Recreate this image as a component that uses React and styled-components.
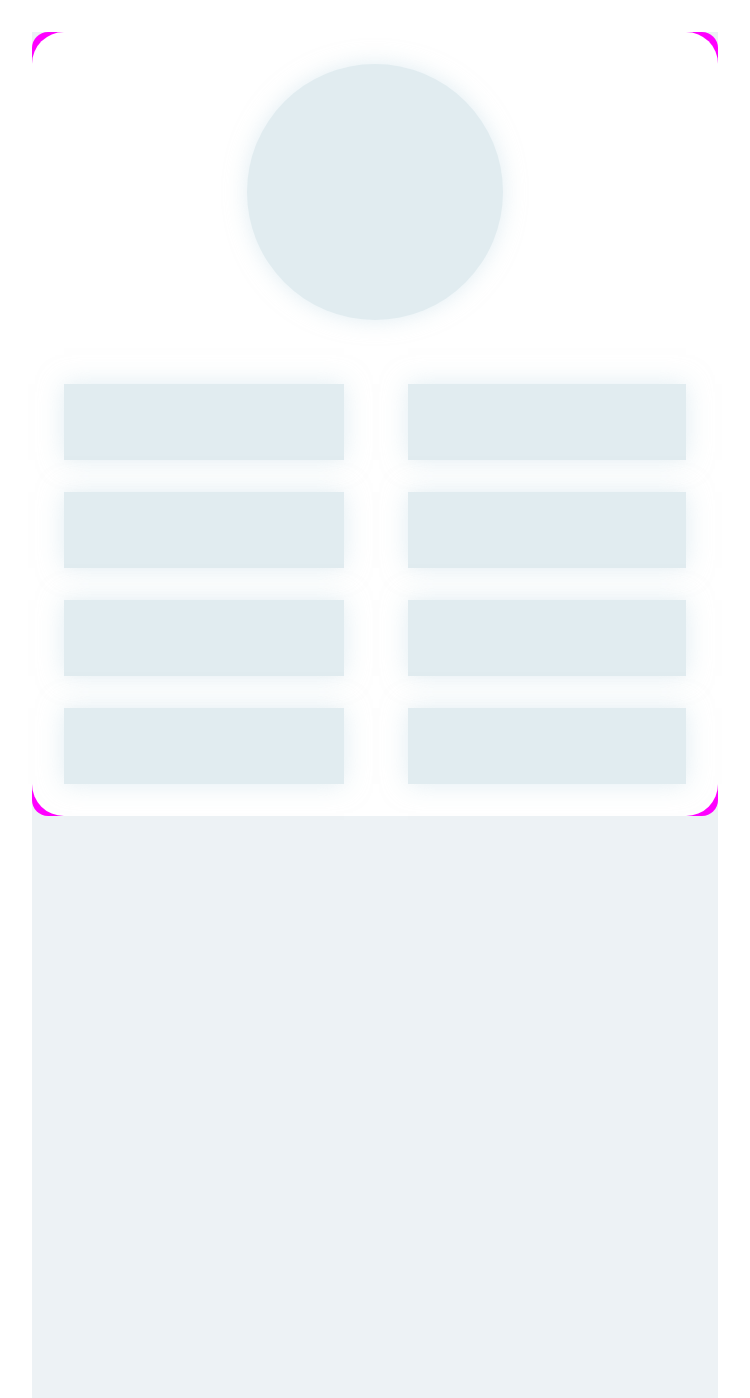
import React from "react";
import styled, { createGlobalStyle } from "styled-components";

const GlobalStyle = createGlobalStyle`
  html, body {
    margin: 0;
    padding: 0;
    background: #ffffff;
    font-family: "Liberation Sans", Arial, sans-serif;
  }
`;

const Page = styled.div`
  padding: 32px 32px 0;
  box-sizing: border-box;
`;

const Panel = styled.div`
  background: #edf2f5;
  min-height: 1366px;
`;

const Frame = styled.div`
  background: #ff00ff;
  border-radius: 16px;
`;

const Card = styled.div`
  background: #ffffff;
  border-radius: 32px;
  padding: 32px;
  display: flex;
  flex-direction: column;
  align-items: center;
  gap: 64px;
`;

const Avatar = styled.div`
  width: 256px;
  height: 256px;
  border-radius: 50%;
  background: #e1ecf0;
  box-shadow: 0 0 22px rgba(200, 222, 232, 0.55);
`;

const Grid = styled.div`
  align-self: stretch;
  display: grid;
  grid-template-columns: 280px 278px;
  justify-content: space-between;
  row-gap: 32px;
`;

const Tile = styled.div`
  height: 76px;
  background: #e1ecf0;
  box-shadow: 0 0 24px rgba(200, 222, 232, 0.55);
`;

export default function App() {
  const tiles = Array.from({ length: 8 });
  return (
    <>
      <GlobalStyle />
      <Page>
        <Panel>
          <Frame>
            <Card>
              <Avatar />
              <Grid>
                {tiles.map((_, i) => (
                  <Tile key={i} />
                ))}
              </Grid>
            </Card>
          </Frame>
        </Panel>
      </Page>
    </>
  );
}
